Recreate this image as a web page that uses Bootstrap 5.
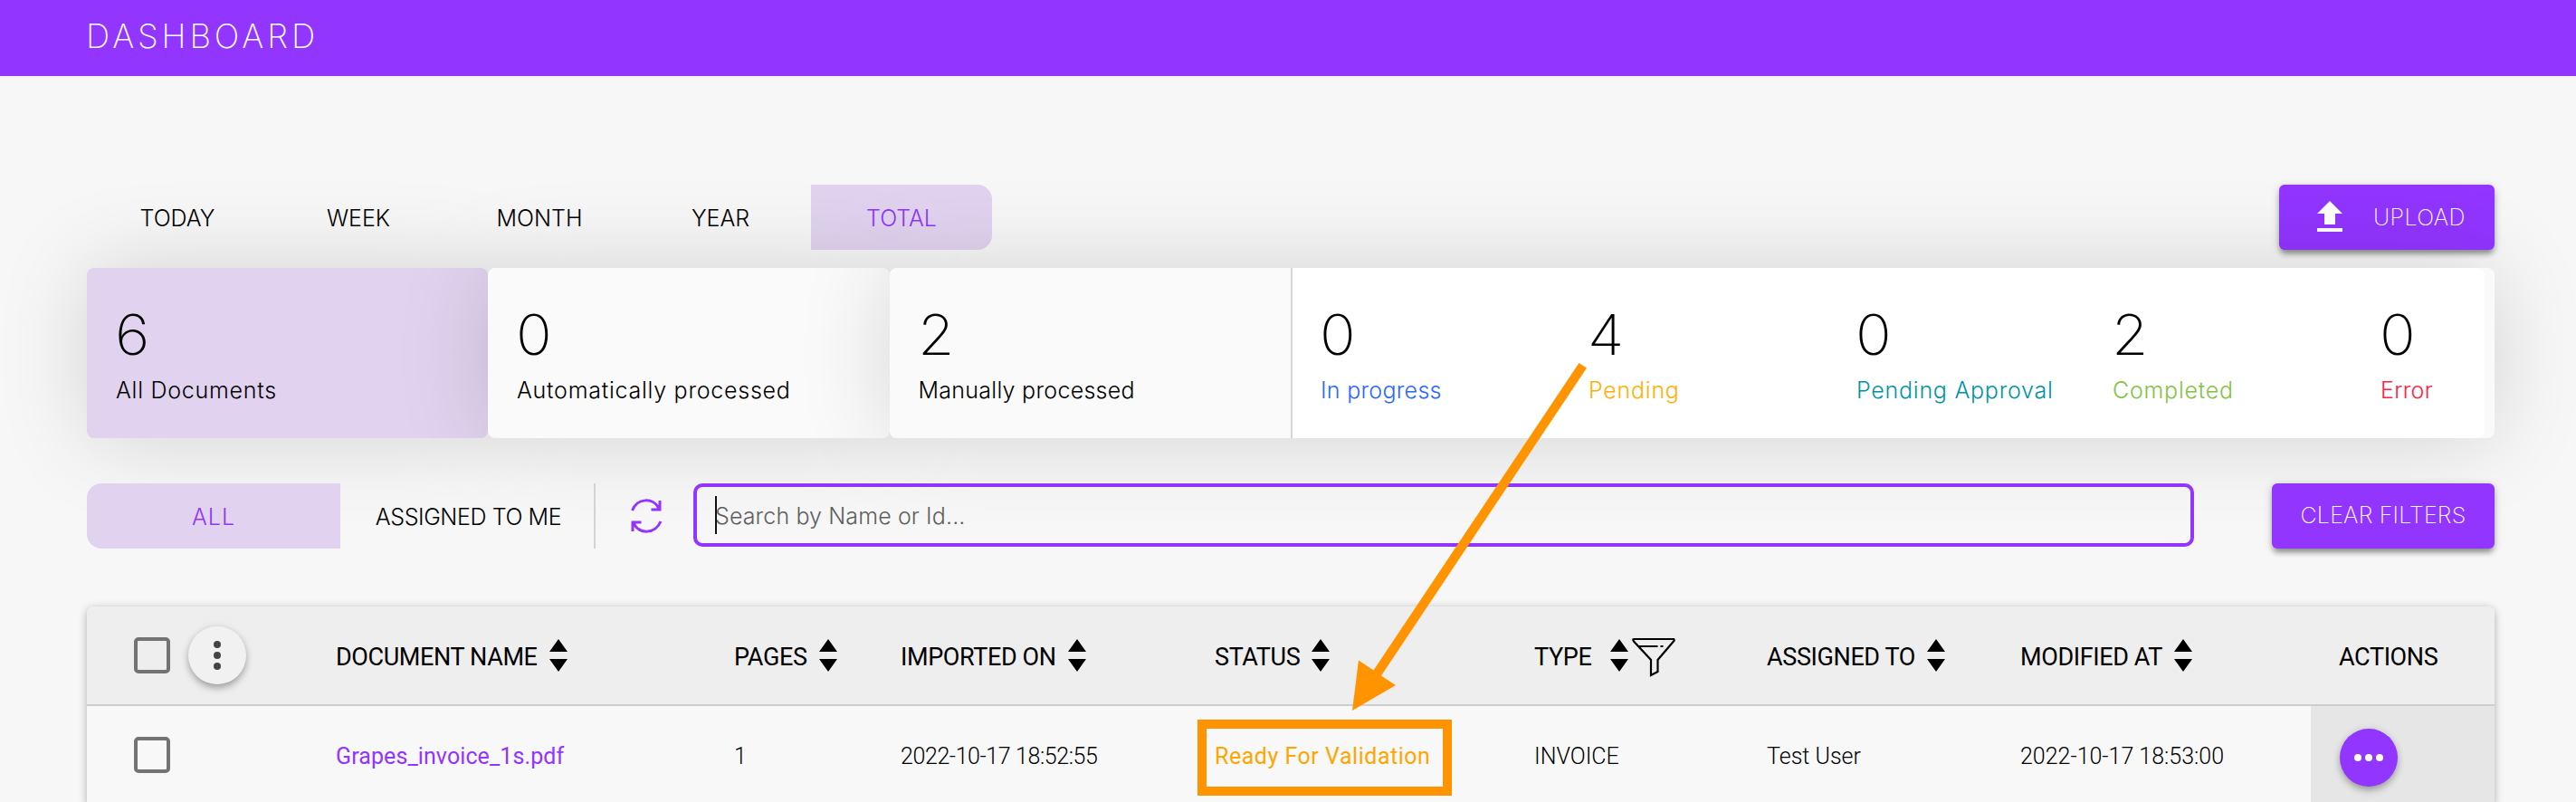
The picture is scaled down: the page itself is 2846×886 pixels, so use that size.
<!DOCTYPE html>
<html lang="en">
<head>
<meta charset="utf-8">
<title>Dashboard</title>
<link rel="stylesheet" href="https://cdn.jsdelivr.net/npm/bootstrap@5.3.0/dist/css/bootstrap.min.css">
<style>
  :root { --violet: #9135ff; --lilac: #e1d3ef; --amber: #ff9400; }
  body { font: 300 25px/36px Inter, "Liberation Sans", sans-serif; color: #000; background: #f7f7f7; height: 886px; overflow: hidden; position: relative; }
  .topbar { height: 84px; background: var(--violet); padding: 4px 95px 0; }
  .topbar h1 { font-size: 36.5px; font-weight: 200; letter-spacing: 3.9px; line-height: 72px; }
  .page { padding: 120px 90px 0 96px; }
  .h72 { height: 72px; }
  .period { width: 200px; }
  .is-on { background: var(--lilac); color: var(--violet); }
  .period.is-on { border-radius: 0 16px 16px 0; }
  .action { background: var(--violet); color: #fff; border: 0; border-radius: 6px; font-size: 25px; font-weight: 200; padding: 0 30px; letter-spacing: .2px; box-shadow: 0 6px 6px -2px rgba(0,0,0,.35), 0 2px 10px rgba(0,0,0,.2); }
  .action:hover { background: #8227ee; color: #fff; }
  .upload { width: 238px; }
  .upload span { padding: 2px 0 0 10px; letter-spacing: .4px; }
  .clear { width: 246px; }

  .stats { margin-top: 20px; height: 188px; position: relative; z-index: 1; }
  .stat { width: 443.5px; padding: 44px 0 0 32px; background: #fafafa; border-radius: 8px; }
  .lift { box-shadow: 0 0 100px rgba(0,0,0,.15); }
  .stat.is-picked { background: var(--lilac); width: 443px; }
  .figure-n { font-size: 62px; font-weight: 200; line-height: 60px; margin-left: -1px; transform: scaleX(1.06); transform-origin: left; }
  .figure-t { line-height: 40px; margin-top: 11px; letter-spacing: .75px; }
  .figure-t.snug { letter-spacing: .28px; }
  .outer { background: #fafafa; border-radius: 8px; padding-right: 11px; }
  .states { background: #fff; border-left: 2px solid #d6d6d6; border-radius: 0 8px 8px 0; padding: 44px 0 0 31px; }
  .state { width: 296px; white-space: nowrap; }
  .state.narrow { width: 283px; }

  .filters { margin-top: 50px; position: relative; z-index: 2; }
  .scope-all { width: 280px; border-radius: 16px 0 0 16px; letter-spacing: 1px; padding-top: 1px; }
  .scope-me { width: 282px; border-right: 2px solid #d3d3d3; letter-spacing: -.4px; padding: 1px 0 0 3px; }
  .refresh { width: 108px; padding-left: 4px; }
  .search { width: 1658px; height: 70px; border: 4px solid var(--violet); border-radius: 10px; padding-left: 20px; }
  .search input { width: 1500px; border: 0; outline: 0; background: none; padding: 2px 0 0; font: inherit; letter-spacing: .12px; color: #000; }
  .search input::placeholder { color: #5e5e5e; opacity: 1; }
  .caret { left: 20px; top: 10px; width: 2px; height: 42px; background: #111; }

  .docs-frame { margin-top: 64px; width: 2660px; border-radius: 8px 8px 0 0; box-shadow: 0 2px 10px rgba(0,0,0,.3); }
  .docs { border-radius: 8px 8px 0 0; overflow: hidden; background: #f8f8f8; }
  .docs table { table-layout: fixed; width: 2660px; border-collapse: separate; border-spacing: 0; font-family: Roboto, "Liberation Sans", sans-serif; white-space: nowrap; }
  .docs th { height: 110px; background: #eee; border-bottom: 2px solid #cecece; font-size: 27px; font-weight: 400; padding: 0 0 0 31px; vertical-align: middle; letter-spacing: -.38px; }
  .docs th span:not(.box) { padding-top: 3px; }
  .docs td { height: 108px; padding: 3px 0 0 31px; vertical-align: middle; font-size: 25px; }
  .docs .pick { padding: 0 0 0 52px; }
  .box { display: block; width: 40px; height: 40px; border: 4px solid #737373; border-radius: 5px; }
  .dotbtn { width: 64px; height: 64px; border-radius: 50%; border: 0; padding: 0; box-shadow: 0 5px 8px -1px rgba(0,0,0,.3), 0 0 8px rgba(0,0,0,.1); }
  .more { margin-left: 20px; background: #f1f1f1; }
  .docs .acts { background: #e6e6e6; padding: 6px 0 0 32px; }
  .acts .dotbtn { background: var(--violet); }
  .docs a { color: var(--violet); text-decoration: none; font-weight: 400; letter-spacing: .1px; }
  .docs .stamp { letter-spacing: -.4px; }
  .sorter { margin-left: 13px; flex: none; }
  .ready { color: #ffa500; font-weight: 400; letter-spacing: .52px; }
  .markup { left: 1323px; top: 395px; z-index: 5; pointer-events: none; }
</style>
</head>
<body>
<svg class="d-none"><symbol id="sort" viewBox="0 0 20 36"><path d="M10 0l10 14H0zM0 22h20L10 36z"/></symbol></svg>
<header class="topbar text-white"><h1 class="m-0">DASHBOARD</h1></header>

<main class="page">
  <div class="d-flex justify-content-between h72">
    <nav class="d-flex text-center" style="line-height:74px">
      <div class="period">TODAY</div>
      <div class="period">WEEK</div>
      <div class="period">MONTH</div>
      <div class="period">YEAR</div>
      <div class="period is-on">TOTAL</div>
    </nav>
    <button class="btn action upload d-flex align-items-center">
      <svg class="ms-2 me-4" width="32" height="36" viewBox="0 0 32 36" fill="#fff"><path d="M18 0l14 14h-8v12h-12v-12h-8zM4 30h28v4h-28z"/></svg>
      <span>UPLOAD</span>
    </button>
  </div>

  <section class="stats d-flex">
    <div class="stat lift is-picked"><div class="figure-n">6</div><div class="figure-t">All Documents</div></div>
    <div class="stat lift"><div class="figure-n">0</div><div class="figure-t">Automatically processed</div></div>
    <div class="outer lift d-flex flex-fill">
      <div class="stat"><div class="figure-n">2</div><div class="figure-t snug">Manually processed</div></div>
      <div class="states d-flex flex-fill">
        <div class="state"><div class="figure-n">0</div><div class="figure-t snug" style="color:#2c67ff">In progress</div></div>
        <div class="state"><div class="figure-n">4</div><div class="figure-t" style="color:#ffb000">Pending</div></div>
        <div class="state narrow"><div class="figure-n">0</div><div class="figure-t" style="color:#0093a5">Pending Approval</div></div>
        <div class="state"><div class="figure-n">2</div><div class="figure-t" style="color:#85c244">Completed</div></div>
        <div class="flex-fill"><div class="figure-n">0</div><div class="figure-t snug" style="color:#ff2343">Error</div></div>
      </div>
    </div>
  </section>

  <section class="filters d-flex h72">
    <div class="scope-all is-on d-flex align-items-center justify-content-center">ALL</div>
    <div class="scope-me d-flex align-items-center justify-content-center">ASSIGNED TO ME</div>
    <div class="refresh d-flex align-items-center justify-content-center">
      <svg width="36" height="40" viewBox="0 0 36 40" fill="none" stroke="#9135ff" stroke-width="3"><path d="M2.500 14C8 0 26-1 32 12M33 3v10H23.500M34 26C28 40 10 41 4 28M3 37V27h9.500"/></svg>
    </div>
    <div class="search position-relative d-flex align-items-center">
      <input type="text" placeholder="Search by Name or Id..."><span class="caret position-absolute"></span>
    </div>
    <button class="btn action clear ms-auto">CLEAR FILTERS</button>
  </section>

  <div class="docs-frame"><div class="docs">
    <table>
      <colgroup><col style="width:244px"><col style="width:440px"><col style="width:184px"><col style="width:347px"><col style="width:353px"><col style="width:257px"><col style="width:280px"><col style="width:352px"><col style="width:203px"></colgroup>
      <thead><tr>
        <th class="pick"><div class="d-flex align-items-center"><span class="box"></span>
          <button class="dotbtn more d-flex align-items-center justify-content-center"><svg width="8" height="34" viewBox="0 0 8 34" fill="#444"><circle cx="4" cy="5" r="4"/><circle cx="4" cy="17" r="4"/><circle cx="4" cy="29" r="4"/></svg></button></div></th>
        <th><div class="d-flex align-items-center"><span>DOCUMENT NAME</span><svg class="sorter" width="20" height="36"><use href="#sort"/></svg></div></th>
        <th><div class="d-flex align-items-center"><span>PAGES</span><svg class="sorter" width="20" height="36"><use href="#sort"/></svg></div></th>
        <th><div class="d-flex align-items-center"><span>IMPORTED ON</span><svg class="sorter" width="20" height="36"><use href="#sort"/></svg></div></th>
        <th><div class="d-flex align-items-center"><span>STATUS</span><svg class="sorter" width="20" height="36"><use href="#sort"/></svg></div></th>
        <th><div class="d-flex align-items-center"><span>TYPE</span><svg class="sorter" style="margin-left:21px" width="20" height="36"><use href="#sort"/></svg><svg class="ms-1" style="margin-top:4px" width="48" height="44" viewBox="0 0 48 44" fill="none" stroke="#000" stroke-width="2.200"><path d="M2 2h44q1.500 1 0 2.500L28.500 25v13l-7.500 4V25L2 4.500Q.5 2 2 2zM8 10h20.500M31.500 10h3"/></svg></div></th>
        <th><div class="d-flex align-items-center"><span>ASSIGNED TO</span><svg class="sorter" width="20" height="36"><use href="#sort"/></svg></div></th>
        <th><div class="d-flex align-items-center"><span>MODIFIED AT</span><svg class="sorter" width="20" height="36"><use href="#sort"/></svg></div></th>
        <th><div class="d-flex"><span>ACTIONS</span></div></th>
      </tr></thead>
      <tbody><tr>
        <td class="pick"><span class="box"></span></td>
        <td><a href="#">Grapes_invoice_1s.pdf</a></td>
        <td>1</td>
        <td class="stamp">2022-10-17 18:52:55</td>
        <td><span class="ready">Ready For Validation</span></td>
        <td>INVOICE</td>
        <td>Test User</td>
        <td>2022-10-17 18:53:00</td>
        <td class="acts"><button class="dotbtn d-flex align-items-center justify-content-center"><svg width="34" height="8" viewBox="0 0 34 8" fill="#fff"><circle cx="5" cy="4" r="4"/><circle cx="17" cy="4" r="4"/><circle cx="29" cy="4" r="4"/></svg></button></td>
      </tr></tbody>
    </table>
  </div></div>
</main>

<!-- Callout: arrow from the Pending figure to the outlined status cell -->
<svg class="markup position-absolute" width="440" height="491" viewBox="1323 395 440 491">
  <path fill="#ff9400" d="M1744.500 401l8.500 5.500L1526 746.500l16 10.500-48 28 7-55.500 16.500 11z"/>
  <rect x="1328" y="800" width="271" height="74" fill="none" stroke="#ff9400" stroke-width="10"/>
</svg>
<script src="https://cdn.jsdelivr.net/npm/bootstrap@5.3.0/dist/js/bootstrap.bundle.min.js"></script>
</body>
</html>
